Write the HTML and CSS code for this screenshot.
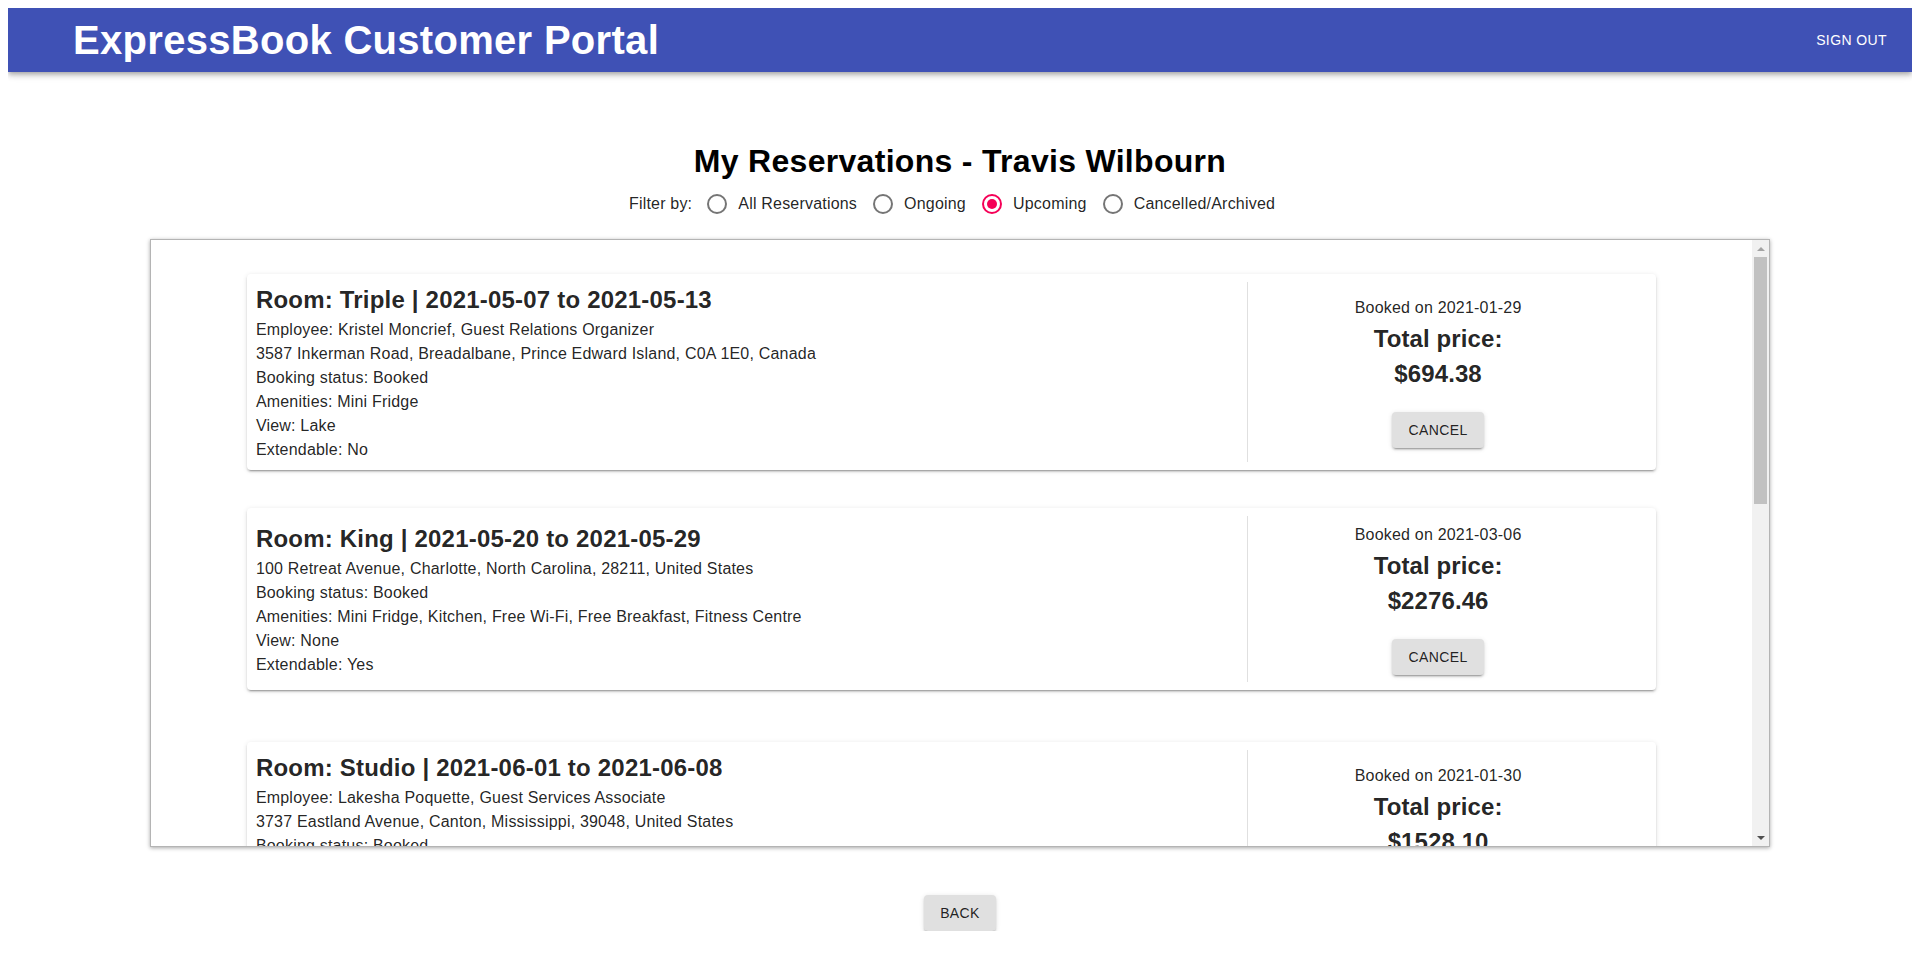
FILE: index.html
```html
<!DOCTYPE html>
<html lang="en">
<head>
<meta charset="utf-8">
<title>ExpressBook Customer Portal</title>
<link rel="stylesheet" href="styles.css">
</head>
<body>
<header class="appbar">
  <h1 class="brand">ExpressBook Customer Portal</h1>
  <button class="signout">Sign Out</button>
</header>

<main class="page">
  <h2 class="page-title">My Reservations - Travis Wilbourn</h2>
  <div class="filter">
    <span class="filter-label">Filter by:</span>
    <label class="opt"><span class="radio"></span><span>All Reservations</span></label>
    <label class="opt"><span class="radio"></span><span>Ongoing</span></label>
    <label class="opt"><span class="radio checked"></span><span>Upcoming</span></label>
    <label class="opt"><span class="radio"></span><span>Cancelled/Archived</span></label>
  </div>

  <section class="scrollbox">
    <div class="viewport">
      <div class="list">
        <div class="slot">
          <article class="card">
            <div class="info">
              <h3 class="room">Room: Triple | 2021-05-07 to 2021-05-13</h3>
              <p>Employee: Kristel Moncrief, Guest Relations Organizer</p>
              <p>3587 Inkerman Road, Breadalbane, Prince Edward Island, C0A 1E0, Canada</p>
              <p>Booking status: Booked</p>
              <p>Amenities: Mini Fridge</p>
              <p>View: Lake</p>
              <p>Extendable: No</p>
            </div>
            <div class="divider"></div>
            <div class="side">
              <p class="booked">Booked on 2021-01-29</p>
              <p class="total">Total price:</p>
              <p class="price">$694.38</p>
              <button class="btn">Cancel</button>
            </div>
          </article>
        </div>

        <div class="slot">
          <article class="card">
            <div class="info">
              <h3 class="room">Room: King | 2021-05-20 to 2021-05-29</h3>
              <p>100 Retreat Avenue, Charlotte, North Carolina, 28211, United States</p>
              <p>Booking status: Booked</p>
              <p>Amenities: Mini Fridge, Kitchen, Free Wi-Fi, Free Breakfast, Fitness Centre</p>
              <p>View: None</p>
              <p>Extendable: Yes</p>
            </div>
            <div class="divider"></div>
            <div class="side">
              <p class="booked">Booked on 2021-03-06</p>
              <p class="total">Total price:</p>
              <p class="price">$2276.46</p>
              <button class="btn">Cancel</button>
            </div>
          </article>
        </div>

        <div class="slot">
          <article class="card">
            <div class="info">
              <h3 class="room">Room: Studio | 2021-06-01 to 2021-06-08</h3>
              <p>Employee: Lakesha Poquette, Guest Services Associate</p>
              <p>3737 Eastland Avenue, Canton, Mississippi, 39048, United States</p>
              <p>Booking status: Booked</p>
              <p>Amenities: Mini Fridge, Free Wi-Fi</p>
              <p>View: City</p>
              <p>Extendable: Yes</p>
            </div>
            <div class="divider"></div>
            <div class="side">
              <p class="booked">Booked on 2021-01-30</p>
              <p class="total">Total price:</p>
              <p class="price">$1528.10</p>
              <button class="btn">Cancel</button>
            </div>
          </article>
        </div>

        <div class="slot">
          <article class="card">
            <div class="info">
              <h3 class="room">Room: Double | 2021-06-15 to 2021-06-19</h3>
              <p>Employee: Marcus Delane, Front Desk Agent</p>
              <p>42 Harbour Street, Halifax, Nova Scotia, B3J 1A1, Canada</p>
              <p>Booking status: Booked</p>
              <p>Amenities: Free Wi-Fi</p>
              <p>View: Sea</p>
              <p>Extendable: No</p>
            </div>
            <div class="divider"></div>
            <div class="side">
              <p class="booked">Booked on 2021-02-11</p>
              <p class="total">Total price:</p>
              <p class="price">$812.40</p>
              <button class="btn">Cancel</button>
            </div>
          </article>
        </div>

        <div class="slot">
          <article class="card">
            <div class="info">
              <h3 class="room">Room: Suite | 2021-07-02 to 2021-07-09</h3>
              <p>Employee: Renee Castillo, Guest Relations Organizer</p>
              <p>810 Lakeshore Drive, Chicago, Illinois, 60611, United States</p>
              <p>Booking status: Booked</p>
              <p>Amenities: Mini Fridge, Kitchen, Free Breakfast</p>
              <p>View: Lake</p>
              <p>Extendable: Yes</p>
            </div>
            <div class="divider"></div>
            <div class="side">
              <p class="booked">Booked on 2021-03-14</p>
              <p class="total">Total price:</p>
              <p class="price">$3104.75</p>
              <button class="btn">Cancel</button>
            </div>
          </article>
        </div>

        <div class="slot last">
          <article class="card">
            <div class="info">
              <h3 class="room">Room: Single | 2021-08-10 to 2021-08-12</h3>
              <p>Employee: Owen Fairbanks, Guest Services Associate</p>
              <p>15 Maple Crescent, Kelowna, British Columbia, V1Y 2B3, Canada</p>
              <p>Booking status: Booked</p>
              <p>Amenities: Free Wi-Fi, Fitness Centre</p>
              <p>View: Mountain</p>
              <p>Extendable: No</p>
            </div>
            <div class="divider"></div>
            <div class="side">
              <p class="booked">Booked on 2021-04-02</p>
              <p class="total">Total price:</p>
              <p class="price">$298.60</p>
              <button class="btn">Cancel</button>
            </div>
          </article>
        </div>
      </div>
    </div>
    <div class="scrollbar" aria-hidden="true">
      <span class="sb-btn"><span class="arrow up"></span></span>
      <span class="sb-track"><span class="sb-thumb"></span></span>
      <span class="sb-btn"><span class="arrow down"></span></span>
    </div>
  </section>

  <div class="actions">
    <button class="btn">Back</button>
  </div>
</main>
</body>
</html>
```

FILE: styles.css
```css
html, body {
  background: #ffffff;
}
body {
  margin: 8px;
  font-family: "Liberation Sans", Arial, sans-serif;
  color: rgba(0, 0, 0, 0.87);
}

/* App bar */
.appbar {
  height: 64px;
  background: #3f51b5;
  color: #ffffff;
  display: flex;
  align-items: center;
  justify-content: space-between;
  padding: 0 17px 0 65px;
  box-shadow: 0 2px 4px -1px rgba(0,0,0,0.2), 0 4px 5px 0 rgba(0,0,0,0.14), 0 1px 10px 0 rgba(0,0,0,0.12);
}
.brand {
  margin: 0;
  font-size: 40px;
  font-weight: 700;
  line-height: 48px;
  letter-spacing: 0.3px;
}
.signout {
  background: none;
  border: 0;
  color: #ffffff;
  font-family: inherit;
  font-size: 14px;
  letter-spacing: 0.4px;
  text-transform: uppercase;
  padding: 6px 8px;
  line-height: 24px;
  cursor: pointer;
}

/* Page */
.page {
  padding-top: 70px;
  display: flex;
  flex-direction: column;
  align-items: center;
}
.page-title {
  margin: 0;
  font-size: 32px;
  line-height: 38px;
  font-weight: 700;
  letter-spacing: 0.3px;
  color: #000000;
}
.filter {
  margin-top: 3px;
  height: 42px;
  display: flex;
  align-items: center;
  font-size: 16px;
  letter-spacing: 0.2px;
  color: rgba(0, 0, 0, 0.87);
}
.filter-label {
  margin-right: 15px;
}
.opt {
  display: flex;
  align-items: center;
  margin-right: 16px;
}
.radio {
  box-sizing: border-box;
  width: 20px;
  height: 20px;
  border-radius: 50%;
  border: 2px solid #757575;
  margin-right: 11px;
  display: flex;
  align-items: center;
  justify-content: center;
}
.radio.checked {
  border-color: #f50057;
}
.radio.checked::after {
  content: "";
  width: 10px;
  height: 10px;
  border-radius: 50%;
  background: #f50057;
}

/* Scroll box */
.scrollbox {
  margin-top: 14px;
  width: 85%;
  height: 606px;
  display: flex;
  border: 1px solid #b4b4b4;
  box-shadow: 0 1px 4px rgba(0,0,0,0.35);
}
.viewport {
  flex: 1;
  overflow: hidden;
}
.scrollbar {
  width: 17px;
  background: #f1f1f1;
  display: flex;
  flex-direction: column;
}
.sb-btn {
  height: 17px;
  display: flex;
  align-items: center;
  justify-content: center;
}
.arrow {
  width: 0;
  height: 0;
  border-left: 4px solid transparent;
  border-right: 4px solid transparent;
}
.arrow.up {
  border-bottom: 4px solid #a3a3a3;
}
.arrow.down {
  border-top: 4px solid #505050;
}
.sb-track {
  flex: 1;
  padding: 0 2px;
}
.sb-thumb {
  display: block;
  height: 247px;
  background: #c1c1c1;
}

.list {
  padding-top: 34px;
  display: flex;
  flex-direction: column;
  align-items: center;
}
.slot {
  width: 88%;
  height: 234px;
  flex-shrink: 0;
}
.slot.last {
  height: 200px;
}

.card {
  background: #ffffff;
  border-radius: 4px;
  padding: 8px 28px 8px 9px;
  display: flex;
  box-shadow: 0 3px 1px -2px rgba(0,0,0,0.2), 0 2px 2px 0 rgba(0,0,0,0.14), 0 1px 5px 0 rgba(0,0,0,0.12);
}
.info {
  flex: 1;
  align-self: center;
}
.room {
  margin: 0;
  font-size: 24px;
  line-height: 36px;
  font-weight: 700;
  letter-spacing: 0.2px;
  color: rgba(0, 0, 0, 0.87);
}
.info p {
  margin: 0;
  font-size: 16px;
  line-height: 24px;
  letter-spacing: 0.2px;
}
.divider {
  width: 1px;
  background: #e0e0e0;
}
.side {
  width: 380px;
  display: flex;
  flex-direction: column;
  align-items: center;
  justify-content: center;
  padding: 7px 0;
  text-align: center;
}
.side p {
  margin: 0;
}
.booked {
  font-size: 16px;
  line-height: 24px;
  letter-spacing: 0.2px;
}
.side .total,
.side .price {
  font-size: 24px;
  line-height: 32px;
  font-weight: 700;
  letter-spacing: 0.1px;
  margin-top: 3px;
}
.side .btn {
  margin-top: 22px;
}

.btn {
  background: #e0e0e0;
  color: rgba(0, 0, 0, 0.87);
  border: 0;
  border-radius: 4px;
  padding: 6px 16px;
  min-width: 64px;
  font-family: inherit;
  font-size: 14px;
  line-height: 24px;
  letter-spacing: 0.4px;
  text-transform: uppercase;
  box-shadow: 0 3px 1px -2px rgba(0,0,0,0.2), 0 2px 2px 0 rgba(0,0,0,0.14), 0 1px 5px 0 rgba(0,0,0,0.12);
  cursor: pointer;
}

.actions {
  margin-top: 48px;
}
```
